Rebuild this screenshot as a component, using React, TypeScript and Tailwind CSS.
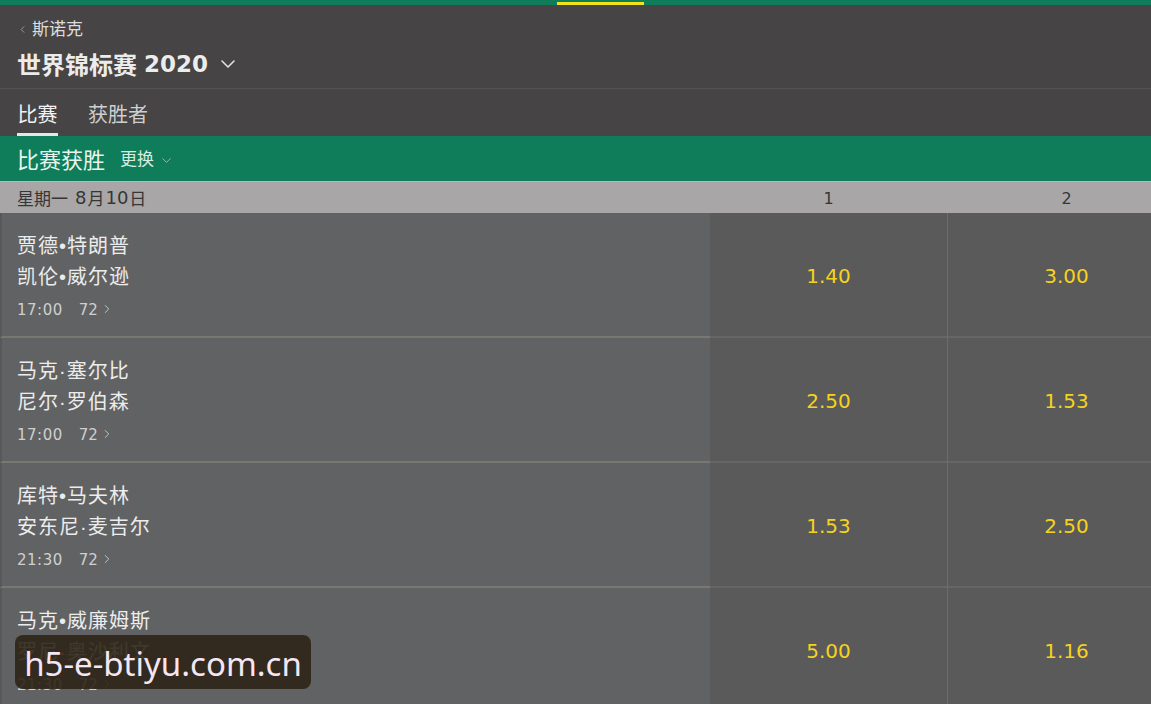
import { ChevronDown, ChevronLeft, ChevronRight } from 'lucide-react';

const matches = [
  { a: '贾德•特朗普', b: '凯伦•威尔逊', time: '17:00', count: 72, o1: '1.40', o2: '3.00' },
  { a: '马克·塞尔比', b: '尼尔·罗伯森', time: '17:00', count: 72, o1: '2.50', o2: '1.53' },
  { a: '库特•马夫林', b: '安东尼·麦吉尔', time: '21:30', count: 72, o1: '1.53', o2: '2.50' },
  { a: '马克•威廉姆斯', b: '罗尼·奥沙利文', time: '21:30', count: 72, o1: '5.00', o2: '1.16' },
];

const cjk = "font-['Noto_Sans_CJK_SC',sans-serif]";
const num = "font-['DejaVu_Sans','Noto_Sans_CJK_SC',sans-serif]";
const names = "font-['Liberation_Sans','Noto_Sans_CJK_SC',sans-serif]";

const App = () => (
  <div className={`relative h-[704px] w-full overflow-hidden bg-[#5a5a5a] ${cjk}`}>
    {/* top strip */}
    <div className="flex h-[5px] items-end bg-[#0f7d59]">
      <div className="ml-[557px] h-[3px] w-[87px] bg-[#f2e21d]" />
    </div>

    {/* header */}
    <div className="bg-[#464444] px-[17px]">
      <div className="flex items-center pt-[14px] text-[17px] leading-none text-[#dcdcdc]">
        <ChevronLeft size={11} strokeWidth={1.5} className="mr-[4px] mt-[4px] text-[#bdbdbd]" />
        <span>斯诺克</span>
      </div>
      <div className="flex h-[52px] items-center pt-[4px] text-[24px] font-bold leading-none text-[#ececec]">
        <span>世界锦标赛</span>
        <span className={`ml-[7px] ${num} text-[23px]`}>2020</span>
        <ChevronDown size={24} strokeWidth={1.6} className="ml-[8px] text-[#e0e0e0]" />
      </div>
    </div>
    <div className="h-px bg-[#545252]" />
    <div className="flex h-[47px] items-end gap-[30px] bg-[#464444] px-[17px] text-[20px] leading-none">
      <div className="flex flex-col items-center text-[#f2f2f2]">
        <span className="pb-[9px]">比赛</span>
        <div className="h-[3px] w-[41px] bg-[#e6e6e6]" />
      </div>
      <span className="pb-[12px] text-[#cfcfcf]">获胜者</span>
    </div>

    {/* market bar */}
    <div className="flex h-[45px] items-center bg-[#0f7d59] px-[17px] pb-[1px]">
      <span className="text-[22px] text-[#e8f5ee]">比赛获胜</span>
      <span className="ml-[15px] text-[17px] text-[#d8ece2]">更换</span>
      <ChevronDown size={15} strokeWidth={1.3} className="ml-[5px] mt-[4px] text-[#9fcfb8]" />
    </div>

    {/* date header */}
    <div className="flex h-[32px] items-center border-t border-[#b8b6b6] bg-[#a8a6a6] text-[17px] text-[#363636]">
      <div className="flex w-[710px] shrink-0 items-center pl-[17px]">
        <span>星期一</span>
        <span className={`ml-[7px] ${num} text-[18px]`}>8</span>
        <span className="ml-[1px]">月</span>
        <span className={`ml-[1px] ${num} text-[18px]`}>10</span>
        <span className="ml-[1px]">日</span>
      </div>
      <div className={`w-[237px] shrink-0 pt-[2px] text-center ${num} text-[16px]`}>1</div>
      <div className="w-px shrink-0" />
      <div className={`w-[237px] shrink-0 pt-[2px] text-center ${num} text-[16px]`}>2</div>
    </div>

    {/* rows */}
    {matches.map((m) => (
      <div key={m.a} className="flex h-[125px]">
        <div className="w-[710px] shrink-0 border-b-2 border-l-2 border-[#77786f] border-l-[#57585a] bg-[#616263] pl-[15px] pt-[18px]">
          <div className={`text-[20px] leading-[31px] tracking-[1px] text-[#ececec] ${names}`}>{m.a}</div>
          <div className={`text-[20px] leading-[31px] tracking-[1px] text-[#ececec] ${names}`}>{m.b}</div>
          <div className={`mt-[2px] flex items-center text-[15px] leading-[30px] text-[#cfcfcf] ${num}`}>
            <span className="tracking-[0.5px]">{m.time}</span>
            <span className="ml-[16px]">{m.count}</span>
            <ChevronRight size={14} strokeWidth={1.5} className="mb-[3px] ml-[2px]" />
          </div>
        </div>
        <div className={`flex w-[237px] shrink-0 items-center justify-center border-b-2 border-[#666666] bg-[#5a5a5a] pt-[2px] text-[20px] text-[#f5d31c] ${num}`}>
          {m.o1}
        </div>
        <div className="w-px shrink-0 bg-[#6c6c6c]" />
        <div className={`flex w-[237px] shrink-0 items-center justify-center border-b-2 border-[#666666] bg-[#5a5a5a] pt-[2px] text-[20px] text-[#f5d31c] ${num}`}>
          {m.o2}
        </div>
      </div>
    ))}

    {/* watermark */}
    <div className="absolute left-[15px] top-[635px] flex h-[54px] w-[296px] items-center justify-center rounded-[8px] bg-[#2e2516]/90 pt-[2px]">
      <span className="font-['Noto_Sans',sans-serif] text-[33px] leading-none text-[#f5e6f5]">h5-e-btiyu.com.cn</span>
    </div>
  </div>
);

export default App;
